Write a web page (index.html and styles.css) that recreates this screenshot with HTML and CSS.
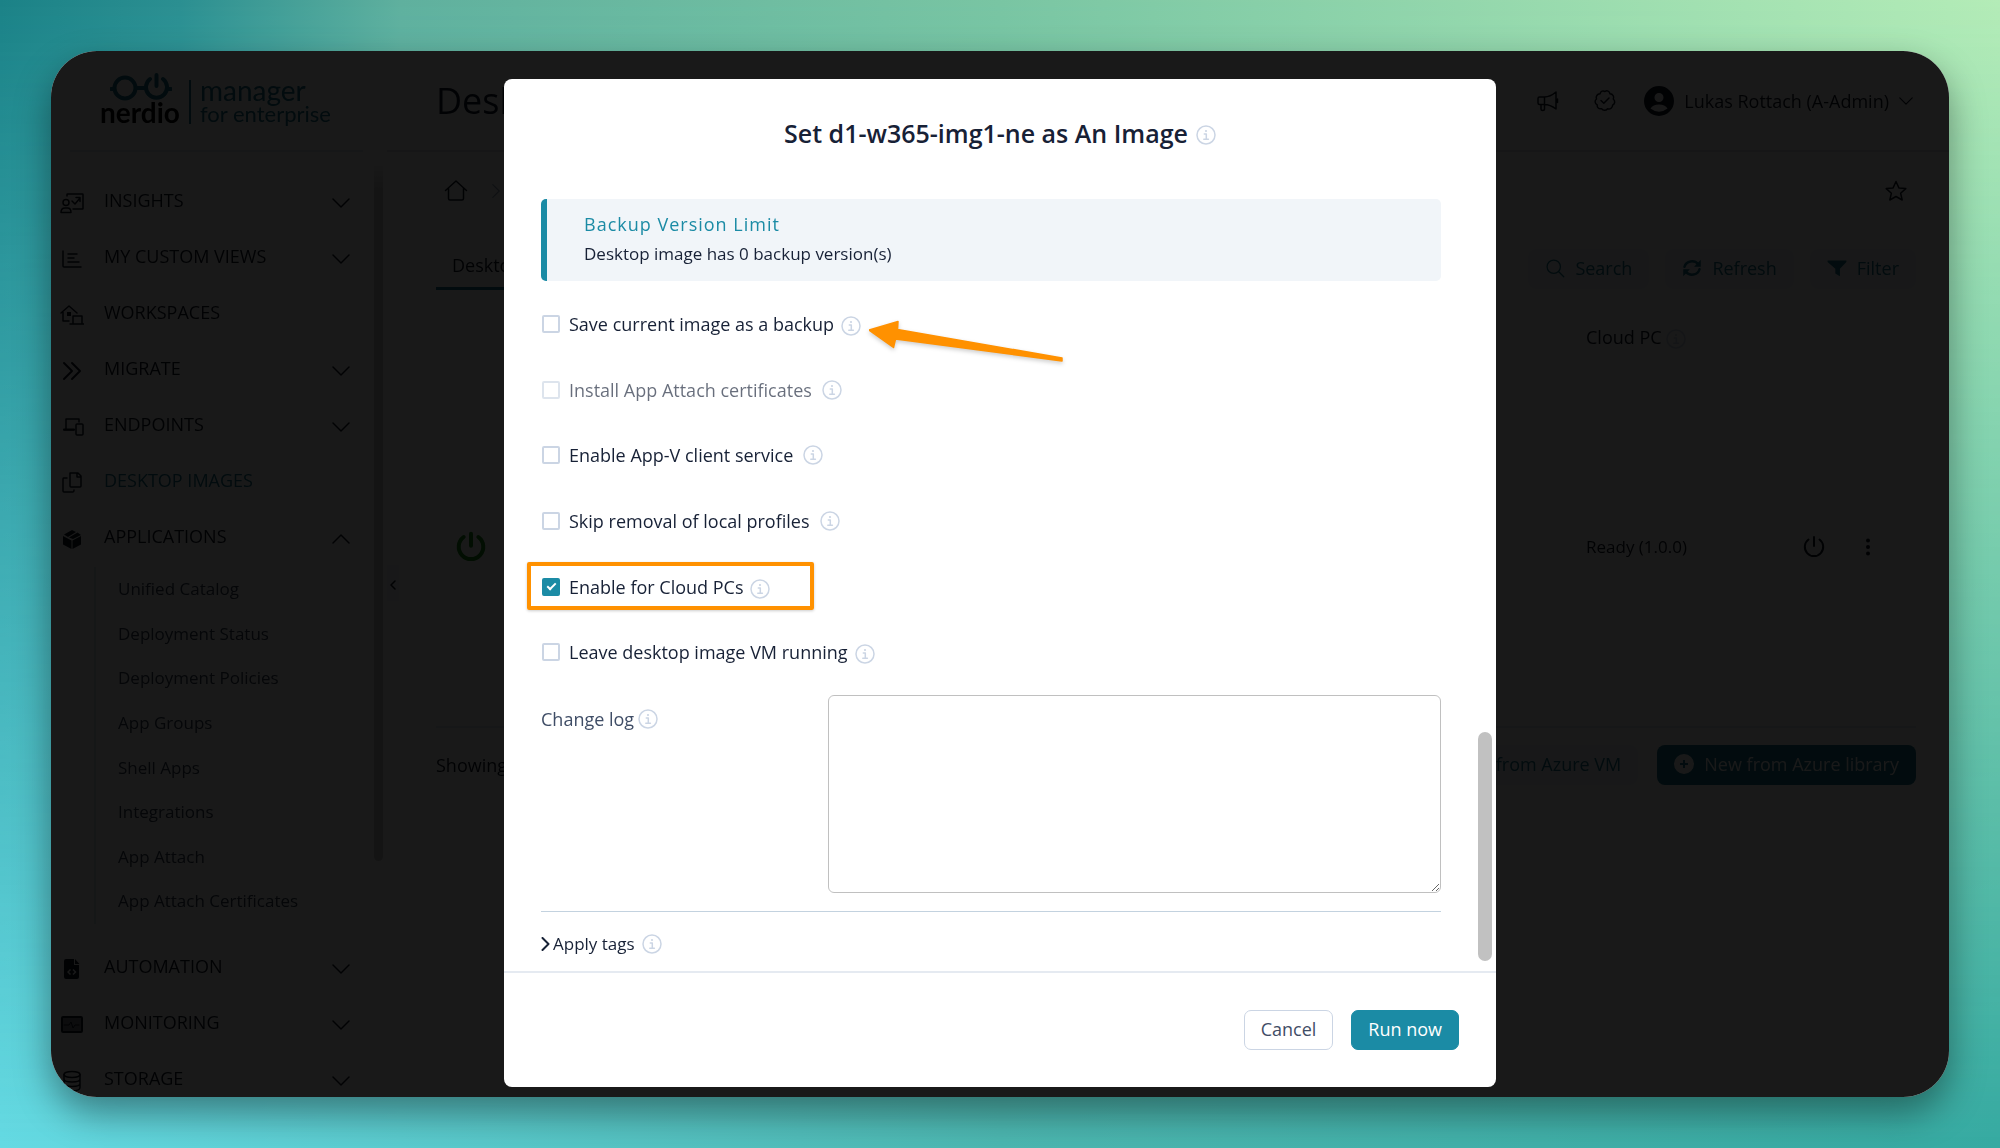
FILE: index.html
```html
<!DOCTYPE html>
<html lang="en">

<head>
    <meta charset="UTF-8">
    <meta name="viewport" content="width=device-width, initial-scale=1.0">
    <link rel="stylesheet" href="styles.css">
    <title>Desktop Images</title>
</head>

<body>
    <!-- icon sprite -->
    <svg class="sprite" aria-hidden="true">
        <symbol id="down" viewBox="0 0 18 18"><path d="M1 5l8 8 8-8" /></symbol>
        <symbol id="up" viewBox="0 0 18 18"><path d="M1 13l8-8 8 8" /></symbol>
        <symbol id="info" viewBox="0 0 20 20">
            <circle cx="10" cy="10" r="9" />
            <path d="M8.3 9H10.3V14M7.8 14.2H12.4" />
            <circle cx="10" cy="6" r="1.1" class="solid" />
        </symbol>
        <symbol id="insights" viewBox="0 0 24 24">
            <path d="M7 5V3.500Q7 3 7.500 3H22.500Q23 3 23 3.500V17.500Q23 18 22.500 18H13M12 10l3 3 5-6M16 6.500h4v4" />
            <circle cx="6" cy="11.500" r="3" />
            <path d="M1 21.500Q1 17 5 17H7.500Q11 17 11 21.500Z" />
        </symbol>
        <symbol id="views" viewBox="0 0 24 24"><path d="M3 4V19Q3 20 4 20H21M8 7h9M8 11h6M8 15h11" /></symbol>
        <symbol id="workspaces" viewBox="0 0 24 24">
            <path d="M1 10L9 3l8 7M3 9V18H9M13 20V13H22V20M10 21H24" />
            <rect x="7" y="9" width="4" height="4" class="solid" />
        </symbol>
        <symbol id="migrate" viewBox="0 0 24 24"><path class="thick" d="M4 4l8 8-8 8M12 4l8 8-8 8" /></symbol>
        <symbol id="endpoints" viewBox="0 0 24 24">
            <path d="M6 14V4H19V7M4 15H14" /><path class="thick" d="M4 14.500H14" />
            <rect x="16" y="9" width="7" height="11" rx="1" />
        </symbol>
        <symbol id="images" viewBox="0 0 24 24">
            <path d="M10 2H18L21 5V15Q21 16 20 16H11Q10 16 10 15V2ZM17 2V6H21M7 7H3.500Q3 7 3 8V20Q3 21 4 21H13Q14 21 14 19" />
        </symbol>
        <symbol id="applications" viewBox="0 0 24 24">
            <path class="solid" d="M12 3l4 2-8 5-4-2.500zM17.500 5.500L21 8l-8 4-4-1.500zM3 9l8.500 4.500V22L3 17.500zM21 9v8.500L12.500 22V13.500z" />
        </symbol>
        <symbol id="automation" viewBox="0 0 24 24">
            <path class="solid" fill-rule="evenodd" d="M6 2H14V8H19V20Q19 22 17 22H6Q4 22 4 20V4Q4 2 6 2ZM10 12L7 15l3 3 1-1-2-2 2-2zM13.500 12l-1 1 2 2-2 2 1 1 3-3zM15 2l4.500 5H15Z" />
        </symbol>
        <symbol id="monitoring" viewBox="0 0 24 24">
            <rect x="2" y="4" width="20" height="15" rx="1" class="screen" />
            <path class="pulse" d="M4 12H9l2-3 2 6 2-3H19" />
        </symbol>
        <symbol id="storage" viewBox="0 0 24 24">
            <ellipse cx="12" cy="5.500" rx="8" ry="3" />
            <path d="M4 5.500V18.500C4 23 20 23 20 18.500V5.500M4 10C4 14 20 14 20 10M4 14.500C4 18.500 20 18.500 20 14.500" />
        </symbol>
        <symbol id="home" viewBox="0 0 24 24"><path d="M1.500 11.500L12 2l10.500 9.500M4.500 9.500V19.500Q4.500 21 6 21H18Q19.500 21 19.500 19.500V9.500" /></symbol>
        <symbol id="star" viewBox="0 0 24 24"><path d="M12 2.500l2.900 6.400 6.900.7-5.200 4.600 1.600 6.800L12 17.500 5.800 21l1.600-6.800L2.200 9.600l6.900-.7z" /></symbol>
        <symbol id="megaphone" viewBox="0 0 24 24">
            <path d="M3.500 8H8.500Q14 8 20 3V20Q14 15.500 8.500 15.500H3.500Q2 15.500 2 14V9.500Q2 8 3.500 8ZM8.500 8V15.500M5 16V20Q5 21.500 6.500 21.500Q8.500 21.500 8.500 20V16M21.500 10V13.500" />
        </symbol>
        <symbol id="badge" viewBox="0 0 24 24">
            <path d="M12 2.500C14 1 16.500 2.200 17 4.800C19.800 5 21.500 7.500 20.300 10C22.500 12 22 15 19.600 16.200C19.500 19 17 20.500 14.600 19.700C12.800 22 10 21.800 8.600 19.700C5.800 20.300 3.900 18.500 4.200 15.900C1.700 14.500 1.400 11.600 3.500 10C2.500 7.300 4.200 5 7 4.800C7.600 2.200 10 1.200 12 2.500ZM8 11.500l2.800 2.800L16 9" />
        </symbol>
        <symbol id="user" viewBox="0 0 30 30">
            <path class="solid" fill-rule="evenodd" d="M15 0A15 15 0 1 1 15 30A15 15 0 1 1 15 0ZM15 7A4.500 4.500 0 1 0 15 16A4.500 4.500 0 1 0 15 7ZM6.500 22.500Q15 29 23.500 22.500Q21 18.500 15 18.500Q9 18.500 6.500 22.500Z" />
        </symbol>
        <symbol id="search" viewBox="0 0 24 24"><circle cx="10.500" cy="10.500" r="8" /><path d="M16.500 16.500L22.500 22.500" /></symbol>
        <symbol id="refresh" viewBox="0 0 24 24">
            <path class="heavy" d="M3 10.500C5 3 15 2 19.500 7.500M21 13.500C19 21 9 22 4.500 16.500" />
            <path class="solid" d="M22.500 2V10.500H14.500ZM1.500 22V13.500H9.500Z" />
        </symbol>
        <symbol id="filter" viewBox="0 0 24 24"><path class="solid" d="M1 3H23Q24 3.500 23 5L15.500 13V22L10 18.500V13L1 5Q0 3.500 1 3Z" /></symbol>
        <symbol id="power" viewBox="0 0 24 24"><path d="M12 2V11M6.500 4.500A9.200 9.200 0 1 0 17.500 4.500" /></symbol>
        <symbol id="dots" viewBox="0 0 24 24">
            <circle cx="12" cy="5.500" r="2" class="solid" /><circle cx="12" cy="12" r="2" class="solid" /><circle cx="12" cy="18.500" r="2" class="solid" />
        </symbol>
        <symbol id="plus" viewBox="0 0 20 20">
            <path class="solid" fill-rule="evenodd" d="M10 0A10 10 0 1 1 10 20A10 10 0 1 1 10 0ZM9 6V9H6V11H9V14H11V11H14V9H11V6Z" />
        </symbol>
    </svg>

    <div class="window">
        <aside class="sidebar">
            <div class="logo">
                <div class="brand">
                    <svg class="brand-mark" viewBox="0 0 62 28" aria-hidden="true">
                        <circle cx="15" cy="15" r="10.500" />
                        <path d="M1 16H4M26 15H36M57 16H61M40 6A10.500 10.500 0 1 0 53 6M46.500 2V13" />
                    </svg>
                    <span class="brand-name">nerdio</span>
                </div>
                <div class="product">
                    <span>manager</span>
                    <span class="product-small">for enterprise</span>
                </div>
            </div>
            <nav class="menu">
                <a href="#" class="menu-item"><svg><use href="#insights" /></svg><span>INSIGHTS</span><svg class="chevron"><use href="#down" /></svg></a>
                <a href="#" class="menu-item"><svg><use href="#views" /></svg><span>MY CUSTOM VIEWS</span><svg class="chevron"><use href="#down" /></svg></a>
                <a href="#" class="menu-item"><svg><use href="#workspaces" /></svg><span>WORKSPACES</span></a>
                <a href="#" class="menu-item"><svg><use href="#migrate" /></svg><span>MIGRATE</span><svg class="chevron"><use href="#down" /></svg></a>
                <a href="#" class="menu-item"><svg><use href="#endpoints" /></svg><span>ENDPOINTS</span><svg class="chevron"><use href="#down" /></svg></a>
                <a href="#" class="menu-item active"><svg><use href="#images" /></svg><span>DESKTOP IMAGES</span></a>
                <a href="#" class="menu-item"><svg><use href="#applications" /></svg><span>APPLICATIONS</span><svg class="chevron"><use href="#up" /></svg></a>
                <div class="submenu">
                    <a href="#">Unified Catalog</a>
                    <a href="#">Deployment Status</a>
                    <a href="#">Deployment Policies</a>
                    <a href="#">App Groups</a>
                    <a href="#">Shell Apps</a>
                    <a href="#">Integrations</a>
                    <a href="#">App Attach</a>
                    <a href="#">App Attach Certificates</a>
                </div>
                <a href="#" class="menu-item"><svg><use href="#automation" /></svg><span>AUTOMATION</span><svg class="chevron"><use href="#down" /></svg></a>
                <a href="#" class="menu-item"><svg><use href="#monitoring" /></svg><span>MONITORING</span><svg class="chevron"><use href="#down" /></svg></a>
                <a href="#" class="menu-item"><svg><use href="#storage" /></svg><span>STORAGE</span><svg class="chevron"><use href="#down" /></svg></a>
            </nav>
            <div class="side-scroll"></div>
            <button type="button" class="collapse" aria-label="Collapse"><svg viewBox="0 0 8 10"><path d="M6 1L2 5l4 4" /></svg></button>
        </aside>

        <main class="main">
            <header class="topbar">
                <h1>Desktop Images</h1>
                <div class="account">
                    <svg><use href="#megaphone" /></svg>
                    <svg><use href="#badge" /></svg>
                    <div class="user">
                        <svg class="avatar"><use href="#user" /></svg>
                        <span>Lukas Rottach (A-Admin)</span>
                        <svg class="caret"><use href="#down" /></svg>
                    </div>
                </div>
            </header>
            <div class="content">
                <div class="crumbs">
                    <svg><use href="#home" /></svg>
                    <svg class="crumb-sep" viewBox="0 0 10 20"><path d="M1 2l8 8-8 8" /></svg>
                    <svg class="favorite"><use href="#star" /></svg>
                </div>
                <div class="toolbar">
                    <a href="#" class="tab">Desktop images</a>
                    <div class="tools">
                        <button type="button" class="soft"><svg><use href="#search" /></svg>Search</button>
                        <button type="button" class="soft"><svg><use href="#refresh" /></svg>Refresh</button>
                        <button type="button" class="soft"><svg><use href="#filter" /></svg>Filter</button>
                    </div>
                </div>
                <table class="images">
                    <thead>
                        <tr>
                            <th></th>
                            <th class="status">Cloud PC <svg class="info"><use href="#info" /></svg></th>
                            <th class="actions"></th>
                        </tr>
                    </thead>
                    <tbody>
                        <tr>
                            <td><svg class="running"><use href="#power" /></svg></td>
                            <td>Ready (1.0.0)</td>
                            <td><div class="row-actions"><svg><use href="#power" /></svg><svg><use href="#dots" /></svg></div></td>
                        </tr>
                    </tbody>
                </table>
                <div class="table-footer">
                    <span>Showing 1 item</span>
                    <button type="button" class="soft">New from Azure VM</button>
                    <button type="button" class="solid-button"><svg><use href="#plus" /></svg>New from Azure library</button>
                </div>
            </div>
        </main>

        <div class="overlay">
            <form class="modal">
                <h2 class="modal-title">Set d1-w365-img1-ne as An Image <svg class="info"><use href="#info" /></svg></h2>
                <div class="modal-body">
                    <div class="notice">
                        <p class="notice-title">Backup Version Limit</p>
                        <p>Desktop image has 0 backup version(s)</p>
                    </div>

                    <div class="options">
                        <div class="option near">
                            <input type="checkbox" id="backup"><label for="backup">Save current image as a backup</label>
                            <svg class="info"><use href="#info" /></svg>
                            <svg class="arrow" viewBox="0 0 194 42"><path d="M0 10L29 1.500 28.500 9.500 193 38V41L26.500 19 24.500 27.500Z" /></svg>
                        </div>
                        <div class="option">
                            <input type="checkbox" id="certs" disabled><label for="certs">Install App Attach certificates</label>
                            <svg class="info"><use href="#info" /></svg>
                        </div>
                        <div class="option">
                            <input type="checkbox" id="appv"><label for="appv">Enable App-V client service</label>
                            <svg class="info"><use href="#info" /></svg>
                        </div>
                        <div class="option">
                            <input type="checkbox" id="profiles"><label for="profiles">Skip removal of local profiles</label>
                            <svg class="info"><use href="#info" /></svg>
                        </div>
                        <div class="option near">
                            <input type="checkbox" id="cloud" checked><label for="cloud">Enable for Cloud PCs</label>
                            <svg class="info"><use href="#info" /></svg>
                            <div class="highlight"></div>
                        </div>
                        <div class="option near">
                            <input type="checkbox" id="running"><label for="running">Leave desktop image VM running</label>
                            <svg class="info"><use href="#info" /></svg>
                        </div>
                    </div>

                    <div class="field">
                        <div class="field-label"><label for="log">Change log</label><svg class="info"><use href="#info" /></svg></div>
                        <textarea id="log"></textarea>
                    </div>

                    <div class="tags">
                        <svg class="expand" viewBox="0 0 8 14"><path d="M1 1l6 6-6 6" /></svg>
                        <span>Apply tags</span>
                        <svg class="info"><use href="#info" /></svg>
                    </div>
                    <div class="modal-scroll"></div>
                </div>
                <div class="modal-footer">
                    <button type="button" class="cancel">Cancel</button>
                    <button type="button" class="run">Run now</button>
                </div>
            </form>
        </div>
    </div>
</body>

</html>
```
FILE: styles.css
```css
*,
*::before,
*::after {
    margin: 0;
    padding: 0;
    box-sizing: border-box;
}

body {
    height: 100vh;
    padding: 51px;
    overflow: hidden;
    font-family: "Open Sans", sans-serif;
    font-size: 17px;
    background: linear-gradient(90deg, #65dae3 0%, #4cb7b1 50%, #36aaa2 100%);
}

/* top half of the wallpaper, faded into the bottom one */
body::before {
    content: "";
    position: fixed;
    inset: 0;
    z-index: -1;
    background: linear-gradient(90deg, #1b8287 0%, #2b8f91 9%, #5fb09e 20%, #79c5a3 50%, #b4ecb7 100%);
    mask-image: linear-gradient(#000, transparent);
}

a {
    color: inherit;
    text-decoration: none;
}

button,
textarea {
    font: inherit;
}

svg {
    flex-shrink: 0;
    width: 24px;
    height: 24px;
    fill: none;
    stroke: currentColor;
    stroke-width: 1.5;
    stroke-linecap: round;
    stroke-linejoin: round;
}

.sprite {
    position: absolute;
    width: 0;
    height: 0;
}

.solid {
    fill: currentColor;
    stroke: none;
}

.thick {
    stroke-width: 2;
}

.heavy {
    stroke-width: 3;
}

.screen {
    fill: #7a7f88;
    stroke-width: 2;
}

.pulse {
    stroke-width: 1;
}

.window {
    position: relative;
    display: flex;
    height: 100%;
    overflow: hidden;
    border-radius: 46px;
    background: #fff;
    color: #111827;
    box-shadow: 0 16px 36px rgba(0, 0, 0, 0.4);
}

/* medium sized labels */
.menu-item,
.user,
.tab,
.soft,
.solid-button,
.images th,
.table-footer,
.notice-title,
.option,
.field-label,
.cancel,
.run {
    font-size: 18px;
    font-weight: 500;
}

/* sidebar */
.sidebar {
    position: relative;
    width: 336px;
    flex-shrink: 0;
}

.logo {
    display: flex;
    height: 101px;
    margin: 0 24px 0 19px;
    padding: 22px 0 0 30px;
    border-bottom: 2px solid #e2e8f0;
}

.brand {
    display: flex;
    flex-direction: column;
    width: 82px;
}

.brand-mark {
    width: 62px;
    height: 28px;
    margin-left: 10px;
    color: #14718a;
    stroke-width: 4;
}

.brand-name {
    font-family: Lato, sans-serif;
    font-size: 28px;
    font-weight: 700;
    line-height: 22px;
    color: #000;
}

.product {
    display: flex;
    flex-direction: column;
    height: 44px;
    margin: 7px 0 0 7px;
    padding-left: 9px;
    border-left: 2px solid #14718a;
    font-family: Lato, sans-serif;
    font-size: 28px;
    line-height: 20px;
    color: #14718a;
}

.product-small {
    font-size: 22px;
    line-height: 28px;
    white-space: nowrap;
}

.menu {
    padding-top: 23px;
}

.menu-item {
    display: flex;
    align-items: center;
    height: 56px;
    padding: 0 37px 0 9px;
}

.menu-item span {
    flex: 1;
    padding: 0 0 6px 20px;
}

.menu-item .chevron {
    width: 18px;
    height: 18px;
}

.menu-item.active span {
    color: #14718a;
}

.submenu {
    display: flex;
    flex-direction: column;
    height: 357px;
    margin: 0 0 17px 43px;
    border-left: 2px solid #d5e5ea;
}

.submenu a {
    flex: 1;
    padding-left: 22px;
    line-height: 44px;
    color: #334155;
}

.side-scroll {
    position: absolute;
    top: 110px;
    right: 4px;
    width: 9px;
    height: 700px;
    border-radius: 5px;
    background: linear-gradient(transparent, #c8c8c8 30px);
}

.collapse {
    position: absolute;
    top: 514px;
    left: 336px;
    width: 12px;
    height: 36px;
    border: 0;
    background: #f1f5f9;
    color: #111827;
}

.collapse svg {
    width: 8px;
    height: 10px;
}

/* page behind the dialog */
.main {
    flex: 1;
}

.topbar {
    display: flex;
    align-items: center;
    justify-content: space-between;
    height: 101px;
    padding: 0 36px 0 49px;
    border-bottom: 2px solid #d9dee6;
}

.topbar h1 {
    font-size: 36px;
    font-weight: 500;
    color: #0f172a;
}

.account {
    display: flex;
    align-items: center;
    gap: 33px;
}

.user {
    display: flex;
    align-items: center;
    gap: 10px;
    margin-left: -6px;
}

.avatar {
    width: 30px;
    height: 30px;
}

.caret {
    width: 14px;
    height: 14px;
}

.content {
    padding: 0 33px 0 49px;
}

.crumbs {
    display: flex;
    align-items: center;
    gap: 24px;
    height: 78px;
    padding: 0 8px;
}

.crumb-sep {
    width: 8px;
    height: 18px;
    color: #94a3b8;
}

.favorite {
    margin-left: auto;
}

.toolbar {
    display: flex;
    justify-content: space-between;
    align-items: center;
    height: 77px;
}

.tab {
    height: 42px;
    padding: 3px 16px;
    border-bottom: 3px solid #14718a;
    line-height: 28px;
}

.tools {
    display: flex;
    gap: 16px;
}

.soft,
.solid-button {
    display: flex;
    align-items: center;
    gap: 10px;
    height: 40px;
    padding: 0 17px 2px;
    border: 0;
    border-radius: 8px;
    background: #f0f6fa;
    color: #14718a;
    white-space: nowrap;
}

.soft svg,
.solid-button svg {
    width: 20px;
    height: 20px;
}

.solid-button {
    background: #14718a;
    color: #fff;
}

.images {
    width: 100%;
    border-collapse: collapse;
    text-align: left;
}

.images th {
    height: 60px;
    background: #f8fafc;
}

.images .info {
    vertical-align: middle;
}

.images .status {
    width: 210px;
}

.images .actions {
    width: 120px;
}

.images td {
    height: 360px;
    border-bottom: 2px solid #e2e8f0;
}

.running {
    display: block;
    width: 32px;
    height: 32px;
    margin-left: 19px;
    color: #168a16;
    stroke-width: 3;
}

.row-actions {
    display: flex;
    gap: 30px;
    padding-left: 6px;
}

.row-actions svg {
    stroke-width: 2;
}

.table-footer {
    display: flex;
    align-items: center;
    gap: 19px;
    height: 74px;
}

.table-footer span {
    flex: 1;
}

/* dialog */
.overlay {
    position: absolute;
    inset: 0;
    padding: 28px 20px 10px;
    background: rgba(0, 0, 0, 0.9);
}

.modal {
    display: flex;
    flex-direction: column;
    max-width: 992px;
    height: 100%;
    margin: 0 auto;
    border-radius: 8px;
    background: #fff;
    color: #172136;
}

.modal-title {
    display: flex;
    align-items: center;
    justify-content: center;
    gap: 8px;
    height: 108px;
    font-size: 25px;
    font-weight: 600;
}

.info {
    width: 20px;
    height: 20px;
    color: #cbd5e4;
}

.modal-title .info,
.near .info {
    margin-top: 4px;
}

.modal-body {
    position: relative;
    flex: 1;
    padding: 12px 55px 0 37px;
}

.notice {
    padding: 10px 37px 12px;
    border-left: 6px solid #1b8ba5;
    border-radius: 5px;
    background: #f1f5f9;
    line-height: 30px;
}

.notice-title {
    color: #1b8ba5;
    letter-spacing: 1px;
}

.options {
    display: flex;
    flex-direction: column;
    height: 414px;
    padding: 10px 0;
}

.option {
    position: relative;
    display: flex;
    flex: 1;
    align-items: center;
}

.option label {
    margin: 0 10px 0 9px;
}

.option input {
    position: relative;
    width: 18px;
    height: 18px;
    margin-left: 1px;
    appearance: none;
    border: 2px solid #cbd5e4;
    border-radius: 2px;
}

.option input:checked {
    border-color: #1b8ba5;
    background: #1b8ba5;
}

.option input:checked::after {
    content: "";
    position: absolute;
    top: 1px;
    left: 5px;
    width: 5px;
    height: 9px;
    border: solid #fff;
    border-width: 0 2px 2px 0;
    transform: rotate(45deg);
}

.option input:disabled,
.option input:disabled + label {
    opacity: 0.65;
}

.near label {
    margin-right: 7px;
}

/* callouts drawn over the form */
.arrow {
    position: absolute;
    top: 29px;
    left: 328px;
    width: 194px;
    height: 42px;
    fill: #ff9100;
    stroke: #ff9100;
    filter: drop-shadow(0 2px 2px rgba(0, 0, 0, 0.2));
}

.highlight {
    position: absolute;
    top: 8px;
    left: -14px;
    width: 287px;
    height: 48px;
    border: 4px solid #ff9100;
    border-radius: 2px;
    box-shadow: 0 1px 3px rgba(0, 0, 0, 0.2);
}

.field {
    display: grid;
    grid-template-columns: 287px 1fr;
}

.field-label {
    display: flex;
    align-items: center;
    gap: 4px;
    height: 48px;
    color: #3f4d66;
}

.field textarea {
    height: 198px;
    padding: 8px;
    border: 1px solid #c0c0c0;
    border-radius: 6px;
}

.tags {
    display: flex;
    align-items: center;
    gap: 7px;
    margin-top: 18px;
    padding-top: 20px;
    border-top: 1px solid #c3d2df;
}

.expand {
    width: 9px;
    height: 14px;
    margin-right: -4px;
    stroke-width: 2;
}

.modal-scroll {
    position: absolute;
    right: 4px;
    bottom: 10px;
    width: 14px;
    height: 229px;
    border-radius: 7px;
    background: #c1c1c1;
}

.modal-footer {
    display: flex;
    align-items: center;
    justify-content: flex-end;
    gap: 18px;
    height: 116px;
    padding-right: 37px;
    border-top: 2px solid #e5eaf1;
}

.cancel,
.run {
    height: 40px;
    padding: 0 16px 2px;
    border: 1px solid #cbd5e4;
    border-radius: 7px;
    background: #fff;
    color: #3f4d66;
}

.run {
    border-color: #1b8ba5;
    background: #1b8ba5;
    color: #fff;
}
```
